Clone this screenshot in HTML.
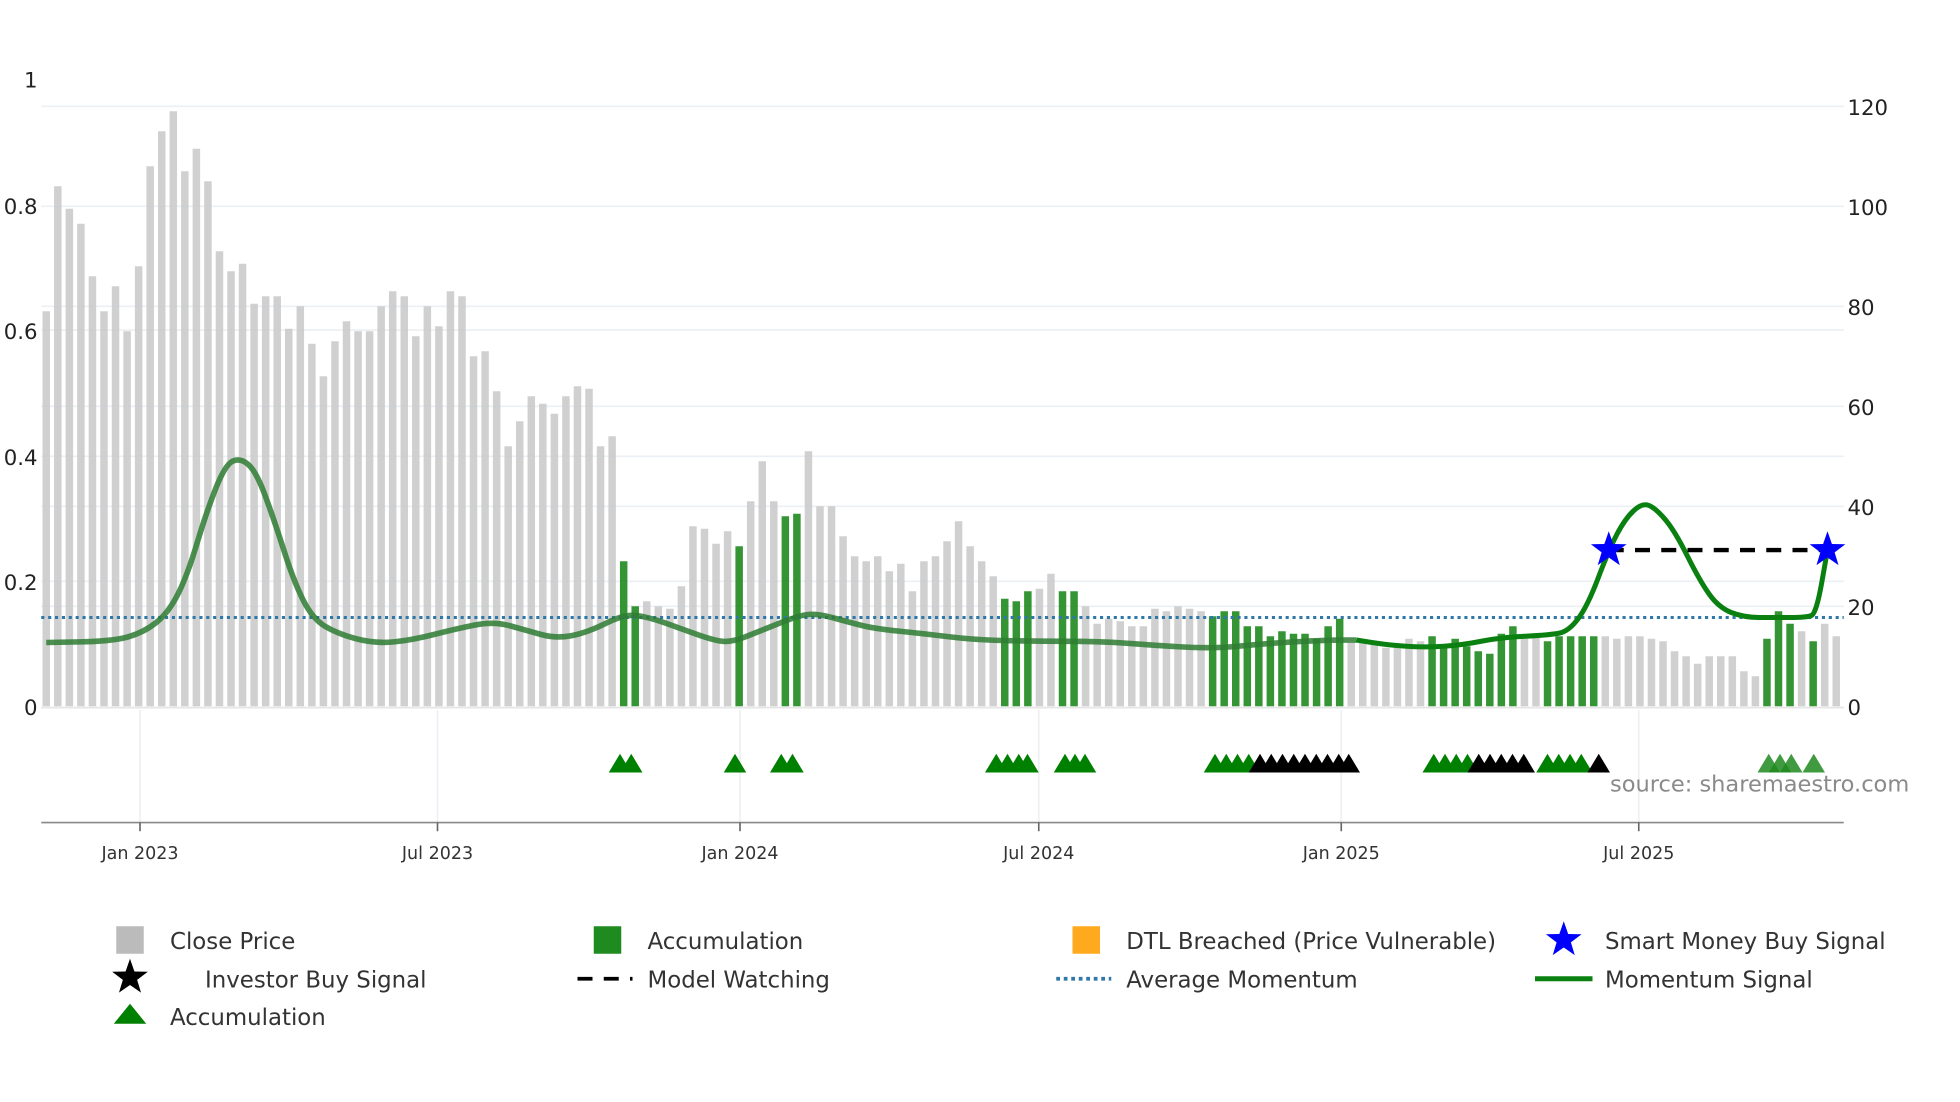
<!DOCTYPE html>
<html><head><meta charset="utf-8"><style>
html,body{margin:0;padding:0;background:#fff;}
svg{display:block;font-family:"DejaVu Sans","Liberation Sans",sans-serif;}
</style></head><body>
<svg id="c" width="1960" height="1102" viewBox="0 0 1568 881.6" xmlns="http://www.w3.org/2000/svg">
<rect width="1568" height="881.6" fill="#fff"/>
<g id="grid" stroke="#eceff3" stroke-width="1.3">
<line x1="33" x2="1475" y1="85" y2="85"/><line x1="33" x2="1475" y1="165" y2="165"/>
<line x1="33" x2="1475" y1="245" y2="245"/><line x1="33" x2="1475" y1="264" y2="264"/>
<line x1="33" x2="1475" y1="325" y2="325"/><line x1="33" x2="1475" y1="365" y2="365"/>
<line x1="33" x2="1475" y1="405" y2="405"/><line x1="33" x2="1475" y1="465" y2="465"/>
<line x1="33" x2="1475" y1="485" y2="485"/>
<line x1="112" x2="112" y1="568" y2="658"/><line x1="350" x2="350" y1="568" y2="658"/>
<line x1="592" x2="592" y1="568" y2="658"/><line x1="831" x2="831" y1="568" y2="658"/>
<line x1="1073" x2="1073" y1="568" y2="658"/><line x1="1311" x2="1311" y1="568" y2="658"/>
</g>
<g id="bars"></g>
<line x1="33" x2="1475" y1="566" y2="566" stroke="#e6e6e6" stroke-width="1.5"/>
<line x1="33" x2="1475" y1="494" y2="494" stroke="#2f78a8" stroke-width="2.4" stroke-dasharray="2.5 3"/>
<path id="oldm" fill="none" stroke="#2e7d32" stroke-opacity="0.85" stroke-width="4.5" stroke-linejoin="round"/>
<path id="newm" fill="none" stroke="#0a8010" stroke-width="4" stroke-linejoin="round"/>
<line x1="1287" x2="1462" y1="440" y2="440" stroke="#000" stroke-width="3.5" stroke-dasharray="12 9"/>
<g id="stars" fill="#0000ff"></g>
<g id="tris"></g>
<line x1="33" x2="1475" y1="658" y2="658" stroke="#888" stroke-width="1.3"/>
<g stroke="#666" stroke-width="1.3">
<line x1="112" x2="112" y1="658" y2="665"/><line x1="350" x2="350" y1="658" y2="665"/>
<line x1="592" x2="592" y1="658" y2="665"/><line x1="831" x2="831" y1="658" y2="665"/>
<line x1="1073" x2="1073" y1="658" y2="665"/><line x1="1311" x2="1311" y1="658" y2="665"/>
</g>
<g fill="#333" font-size="14" text-anchor="middle">
<text x="112" y="687">Jan 2023</text><text x="350" y="687">Jul 2023</text>
<text x="592" y="687">Jan 2024</text><text x="831" y="687">Jul 2024</text>
<text x="1073" y="687">Jan 2025</text><text x="1311" y="687">Jul 2025</text>
</g>
<g fill="#222" font-size="17" text-anchor="end">
<text x="30" y="70">1</text><text x="30" y="171">0.8</text><text x="30" y="271">0.6</text>
<text x="30" y="372">0.4</text><text x="30" y="472">0.2</text><text x="30" y="572">0</text>
</g>
<g fill="#222" font-size="17">
<text x="1478" y="92">120</text><text x="1478" y="172">100</text><text x="1478" y="252">80</text>
<text x="1478" y="332">60</text><text x="1478" y="412">40</text><text x="1478" y="492">20</text><text x="1478" y="572">0</text>
</g>
<text x="1288" y="633" fill="#8a8a8a" font-size="18">source: sharemaestro.com</text>
<g font-size="18.3" fill="#333">
<rect x="93" y="741" width="22" height="22" fill="#bbb"/>
<text x="136" y="759">Close Price</text>
<rect x="475" y="741" width="22" height="22" fill="#1f8a1f"/>
<text x="518" y="759">Accumulation</text>
<rect x="858" y="741" width="22" height="22" fill="#ffa91f"/>
<text x="901" y="759">DTL Breached (Price Vulnerable)</text>
<text x="1284" y="759">Smart Money Buy Signal</text>
<text x="164" y="790">Investor Buy Signal</text>
<line x1="462" x2="506" y1="783" y2="783" stroke="#000" stroke-width="3" stroke-dasharray="12 9"/>
<text x="518" y="790">Model Watching</text>
<line x1="845" x2="889" y1="783" y2="783" stroke="#2f78a8" stroke-width="3" stroke-dasharray="3 3"/>
<text x="901" y="790">Average Momentum</text>
<line x1="1228" x2="1274" y1="783" y2="783" stroke="#0a8010" stroke-width="4"/>
<text x="1284" y="790">Momentum Signal</text>
<polygon points="91,819 104,803 117,819" fill="#008000"/>
<text x="136" y="820">Accumulation</text>
</g>
<g id="legstars"></g>
</svg>
<script>
(function(){
var NS="http://www.w3.org/2000/svg";
function el(t,a,p){var e=document.createElementNS(NS,t);for(var k in a)e.setAttribute(k,a[k]);document.getElementById(p).appendChild(e);return e;}
var v=[79,104,99.5,96.5,86,79,84,75,88,108,115,119,107,111.5,105,91,87,88.5,80.5,82,82,75.5,80,72.5,66,73,77,75,75,80,83,82,74,80,76,83,82,70,71,63,52,57,62,60.5,58.5,62,64,63.5,52,54,29,20,21,20,19.5,24,36,35.5,32.5,35,32,41,49,41,38,38.5,51,40,40,34,30,29,30,27,28.5,23,29,30,33,37,32,29,26,21.5,21,23,23.5,26.5,23,23,20,16.5,17.5,17,16,16,19.5,19,20,19.5,19,18,19,19,16,16,14,15,14.5,14.5,13.5,16,17.5,12.7,13,12.5,11.7,12,13.5,13,14,12,13.5,12,11,10.5,14.5,16,14,14,13,14,14,14,14,14,13.5,14,14,13.5,13,11,10,8.5,10,10,10,7,6,13.5,19,16.5,15,13,16.5,14];
var n=v.length,x0=37,x1=1469,dx=(x1-x0)/(n-1);
var G=[[492,510],[584,592],[620,638],[795,825],[850,868],[968,1080],[1145,1215],[1236,1282],[1410,1436],[1448,1455]];
for(var i=0;i<n;i++){var x=x0+i*dx,g=false;for(var j=0;j<G.length;j++)if(x>=G[j][0]&&x<=G[j][1])g=true;
var h=v[i]*4;el("rect",{x:(x-3).toFixed(2),y:(565-h).toFixed(2),width:6,height:h.toFixed(2),fill:g?"#1f8a1f":"#c8c8c8","fill-opacity":g?0.9:0.85},"bars");}
function path(pts){var d="M"+pts[0][0]+","+pts[0][1];for(var i=1;i<pts.length;i++){var p0=pts[i-1],p1=pts[i];var mx=(p0[0]+p1[0])/2;d+=" Q"+p0[0]+","+p0[1]+" "+mx+","+((p0[1]+p1[1])/2);}d+=" L"+pts[pts.length-1][0]+","+pts[pts.length-1][1];return d;}
var old=[[37,514],[90,513],[115,506],[135,490],[150,460],[165,410],[180,372],[192,366],[205,377],[220,418],[235,465],[250,495],[270,507],[300,515],[330,512],[365,503],[395,497],[420,504],[445,511],[470,506],[500,491],[520,494],[545,503],[570,512],[585,514],[610,504],[640,492],[655,491],[680,498],[700,503],[740,507],[780,512],[830,513],[880,513],[920,516],[970,519],[1010,515],[1060,512],[1085,512]];
var nw=[[1085,512],[1110,516],[1140,518],[1170,516],[1200,510],[1240,508],[1255,505],[1270,485],[1287,440],[1300,415],[1314,402],[1325,407],[1340,425],[1360,465],[1375,486],[1395,494],[1420,494],[1445,494],[1453,491],[1462,440]];
document.getElementById("oldm").setAttribute("d",path(old));
document.getElementById("newm").setAttribute("d",path(nw));
function star(cx,cy,r,p,fill){var s="";for(var k=0;k<10;k++){var a=-Math.PI/2+k*Math.PI/5,rr=k%2?r*0.4:r;s+=(cx+rr*Math.cos(a)).toFixed(2)+","+(cy+rr*Math.sin(a)).toFixed(2)+" ";}el("polygon",{points:s,fill:fill},p);}
star(1287,440,15,"stars","#0000ff");star(1462,440,15,"stars","#0000ff");
star(1251,752,15,"legstars","#0000ff");star(104,782,15,"legstars","#000");
function tri(cx,c,op){el("polygon",{points:(cx-9)+",618 "+cx+",603 "+(cx+9)+",618",fill:c,"fill-opacity":op||1},"tris");}
var gr=[496,505,588,625,634,797,806,815,822,852,860,868,972,981,990,999,1147,1156,1165,1174,1238,1247,1256,1265];
gr.forEach(function(x){tri(x,"#008000");});
var bl=[1008,1017,1026,1035,1044,1053,1062,1071,1079,1183,1192,1201,1210,1219,1279];
bl.forEach(function(x){tri(x,"#000");});
[1415,1424,1433,1451].forEach(function(x){tri(x,"#1f8a1f",0.85);});
})();
</script>
</body></html>
